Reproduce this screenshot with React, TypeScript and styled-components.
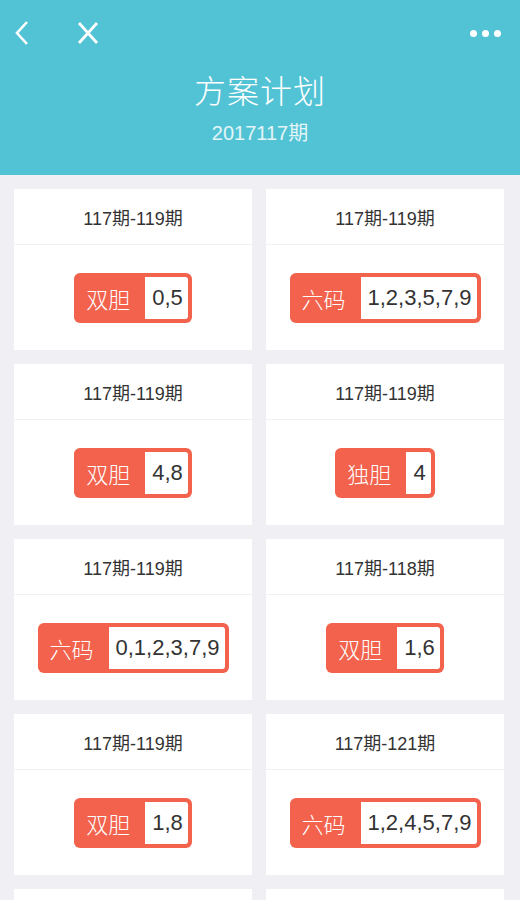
import styled, { createGlobalStyle } from "styled-components";

type Plan = { range: string; kind: string; nums: string };

const plans: Plan[] = [
  { range: "117期-119期", kind: "双胆", nums: "0,5" },
  { range: "117期-119期", kind: "六码", nums: "1,2,3,5,7,9" },
  { range: "117期-119期", kind: "双胆", nums: "4,8" },
  { range: "117期-119期", kind: "独胆", nums: "4" },
  { range: "117期-119期", kind: "六码", nums: "0,1,2,3,7,9" },
  { range: "117期-118期", kind: "双胆", nums: "1,6" },
  { range: "117期-119期", kind: "双胆", nums: "1,8" },
  { range: "117期-121期", kind: "六码", nums: "1,2,4,5,7,9" },
  { range: "117期-119期", kind: "双胆", nums: "2,7" },
  { range: "117期-119期", kind: "双胆", nums: "3,6" },
];

const App = () => {
  return (
    <Page>
      <GlobalStyle />
      <Header>
        <NavBar>
          <NavLeft>
            <IconBtn>
              <svg width="18" height="26" viewBox="0 0 18 26">
                <path d="M14 2 L4 13 L14 24" fill="none" stroke="#fff" strokeWidth="2.6" />
              </svg>
            </IconBtn>
            <IconBtn>
              <svg width="22" height="24" viewBox="0 0 22 24">
                <path d="M2 2 L20 22 M20 2 L2 22" fill="none" stroke="#fff" strokeWidth="2.8" />
              </svg>
            </IconBtn>
          </NavLeft>
          <Dots>
            <Dot />
            <Dot />
            <Dot />
          </Dots>
        </NavBar>
        <Title>方案计划</Title>
        <SubTitle>2017117期</SubTitle>
      </Header>
      <Grid>
        {plans.map((p, i) => (
          <Card key={i}>
            <CardHead>{p.range}</CardHead>
            <CardBody>
              <Badge>
                <Kind>{p.kind}</Kind>
                <Nums>{p.nums}</Nums>
              </Badge>
            </CardBody>
          </Card>
        ))}
      </Grid>
    </Page>
  );
};

export default App;

const GlobalStyle = createGlobalStyle`
  body {
    margin: 0;
    background: #efeff4;
    font-family: "Liberation Sans", "Noto Sans CJK SC", sans-serif;
  }
`;

const Page = styled.div`
  width: 520px;
  height: 900px;
  overflow: hidden;
  background: #efeff4;
`;

const Header = styled.div`
  height: 175px;
  background: #52c3d4;
  display: flex;
  flex-direction: column;
  align-items: center;
  box-sizing: border-box;
`;

const NavBar = styled.div`
  width: 100%;
  height: 66px;
  display: flex;
  align-items: center;
  justify-content: space-between;
  padding: 0 19px 0 13px;
  box-sizing: border-box;
`;

const NavLeft = styled.div`
  display: flex;
  align-items: center;
  gap: 46px;
`;

const IconBtn = styled.div`
  display: flex;
  align-items: center;
  svg {
    display: block;
  }
`;

const Dots = styled.div`
  display: flex;
  gap: 5px;
`;

const Dot = styled.span`
  width: 7px;
  height: 7px;
  border-radius: 50%;
  background: #fff;
`;

const Title = styled.div`
  color: #fff;
  font-size: 32px;
  line-height: 46px;
  font-family: "Noto Sans CJK SC", sans-serif;
  font-weight: 300;
  letter-spacing: 1px;
`;

const SubTitle = styled.div`
  color: #e3f5f8;
  font-size: 20px;
  line-height: 28px;
  margin-top: 7px;
  font-family: "Liberation Sans", "Noto Sans CJK SC", sans-serif;
`;

const Grid = styled.div`
  display: grid;
  grid-template-columns: 238px 238px;
  column-gap: 14px;
  row-gap: 14px;
  padding: 14px 16px 0 14px;
`;

const Card = styled.div`
  background: #fff;
  height: 161px;
  display: flex;
  flex-direction: column;
`;

const CardHead = styled.div`
  height: 55px;
  display: flex;
  align-items: center;
  justify-content: center;
  border-bottom: 1px solid #f1f1f4;
  font-size: 18px;
  color: #333;
`;

const CardBody = styled.div`
  flex: 1;
  display: flex;
  align-items: center;
  justify-content: center;
`;

const Badge = styled.div`
  display: flex;
  align-items: stretch;
  height: 50px;
  box-sizing: border-box;
  border: 4px solid #f2624c;
  border-left: none;
  border-radius: 6px;
  background: #f2624c;
  overflow: hidden;
`;

const Kind = styled.span`
  display: flex;
  align-items: center;
  padding: 0 15px 0 12px;
  color: #fff;
  font-size: 22px;
  font-family: "Noto Sans CJK SC", sans-serif;
  font-weight: 300;
`;

const Nums = styled.span`
  display: flex;
  align-items: center;
  padding: 0 5px 0 7px;
  background: #fff;
  color: #333;
  font-size: 22px;
  border-radius: 0 2px 2px 0;
`;
